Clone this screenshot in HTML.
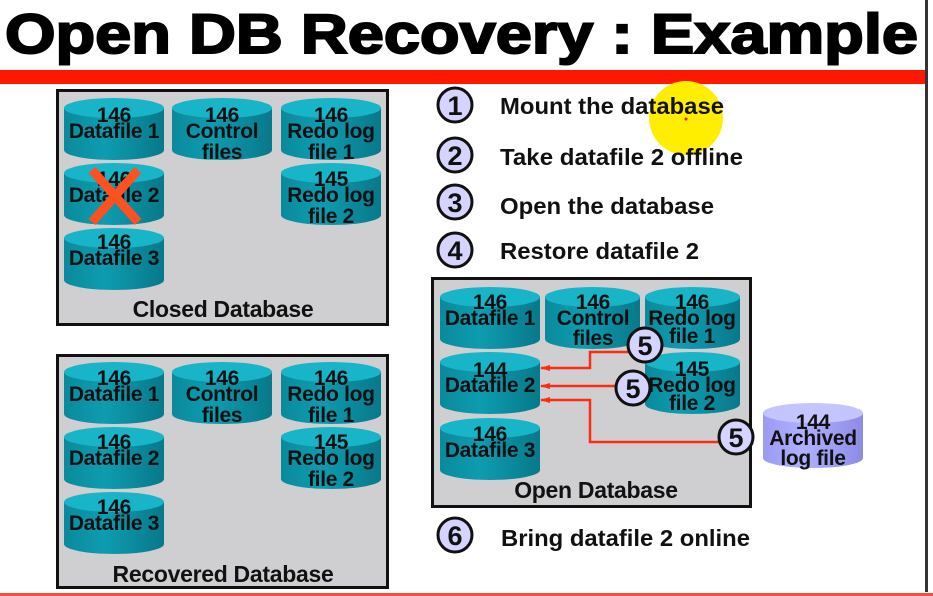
<!DOCTYPE html>
<html><head><meta charset="utf-8"><style>
html,body{margin:0;padding:0;background:#fff;width:933px;height:596px;overflow:hidden}
svg{display:block}
text{font-family:"Liberation Sans",Arial,sans-serif;font-weight:bold}
</style></head><body>
<svg width="933" height="596" viewBox="0 0 933 596" xmlns="http://www.w3.org/2000/svg">
<defs>
<linearGradient id="cb" x1="0" x2="1"><stop offset="0" stop-color="#0a8a9c"/><stop offset="0.4" stop-color="#0e9cb0"/><stop offset="1" stop-color="#07798a"/></linearGradient>
<linearGradient id="pb" x1="0" x2="1"><stop offset="0" stop-color="#9a9af2"/><stop offset="0.4" stop-color="#b0b0ff"/><stop offset="1" stop-color="#8c8ce6"/></linearGradient>
<g id="cyl"><path d="M0,10 V52 A50,10 0 0 0 100,52 V10 Z" fill="url(#cb)"/><ellipse cx="50" cy="10" rx="50" ry="10" fill="#18b4c8"/></g>
<g id="cylp"><path d="M0,10 V55 A50,10 0 0 0 100,55 V10 Z" fill="url(#pb)"/><ellipse cx="50" cy="10" rx="50" ry="10" fill="#c4c4ff"/></g>
<marker id="ah" markerUnits="userSpaceOnUse" markerWidth="10" markerHeight="8" refX="9" refY="4" orient="auto"><path d="M0,1 L10,4 L0,7 Z" fill="#ff2a10"/></marker>
</defs>

<text x="5" y="53" font-size="56" textLength="913" lengthAdjust="spacingAndGlyphs" stroke="#000" stroke-width="2">Open DB Recovery : Example</text>
<rect x="0" y="70" width="926" height="14" fill="#ff1800"/>
<rect x="925" y="0" width="3" height="592" fill="#333"/>
<rect x="0" y="593" width="933" height="3" fill="#f05040"/>

<g font-size="21" text-anchor="middle" fill="#111" letter-spacing="-0.3">
<!-- Closed DB -->
<rect x="57.5" y="90.5" width="330" height="234" fill="#cfcfd1" stroke="#111" stroke-width="3"/>
<use href="#cyl" x="64" y="98"/><text x="114" y="122">146</text><text x="114" y="138">Datafile 1</text>
<use href="#cyl" x="172" y="98"/><text x="222" y="122">146</text><text x="222" y="138">Control</text><text x="222" y="159">files</text>
<use href="#cyl" x="281" y="98"/><text x="331" y="122">146</text><text x="331" y="138">Redo log</text><text x="331" y="159">file 1</text>
<use href="#cyl" x="64" y="163"/><text x="114" y="186">146</text><text x="114" y="202">Datafile 2</text>
<use href="#cyl" x="281" y="163"/><text x="331" y="186">145</text><text x="331" y="202">Redo log</text><text x="331" y="223">file 2</text>
<use href="#cyl" x="64" y="228"/><text x="114" y="249">146</text><text x="114" y="265">Datafile 3</text>
<text x="223" y="317" font-size="23">Closed Database</text>

<!-- Recovered DB -->
<rect x="57.5" y="355.5" width="330" height="232" fill="#cfcfd1" stroke="#111" stroke-width="3"/>
<use href="#cyl" x="64" y="362"/><text x="114" y="385">146</text><text x="114" y="401">Datafile 1</text>
<use href="#cyl" x="172" y="362"/><text x="222" y="385">146</text><text x="222" y="401">Control</text><text x="222" y="422">files</text>
<use href="#cyl" x="281" y="362"/><text x="331" y="385">146</text><text x="331" y="401">Redo log</text><text x="331" y="422">file 1</text>
<use href="#cyl" x="64" y="427"/><text x="114" y="449">146</text><text x="114" y="465">Datafile 2</text>
<use href="#cyl" x="281" y="427"/><text x="331" y="449">145</text><text x="331" y="465">Redo log</text><text x="331" y="486">file 2</text>
<use href="#cyl" x="64" y="492"/><text x="114" y="514">146</text><text x="114" y="530">Datafile 3</text>
<text x="223" y="582" font-size="23">Recovered Database</text>
</g>
<g stroke="#ff5020" stroke-width="9"><line x1="92" y1="170" x2="138" y2="222"/><line x1="138" y1="170" x2="92" y2="222"/></g>

<!-- Open DB -->
<rect x="432.5" y="278.5" width="318" height="228" fill="#cfcfd1" stroke="#111" stroke-width="3"/>
<g font-size="21" text-anchor="middle" fill="#111" letter-spacing="-0.3">
<use href="#cyl" x="440" y="287"/><text x="490" y="309">146</text><text x="490" y="325">Datafile 1</text>
<use href="#cyl" transform="translate(545,287) scale(0.95,1)"/><text x="593" y="309">146</text><text x="593" y="325">Control</text><text x="593" y="345">files</text>
<use href="#cyl" transform="translate(645,287) scale(0.95,1)"/><text x="692" y="309">146</text><text x="692" y="325">Redo log</text><text x="692" y="343">file 1</text>
<use href="#cyl" x="440" y="352"/><text x="490" y="377">144</text><text x="490" y="392">Datafile 2</text>
<use href="#cyl" transform="translate(645,352) scale(0.95,1)"/><text x="692" y="376">145</text><text x="692" y="392">Redo log</text><text x="692" y="410">file 2</text>
<use href="#cyl" x="440" y="418"/><text x="490" y="441">146</text><text x="490" y="457">Datafile 3</text>
<text x="596" y="498" font-size="23">Open Database</text>
<use href="#cylp" x="763" y="403"/>
<text x="813" y="429">144</text><text x="813" y="445">Archived</text><text x="813" y="465">log file</text>
</g>

<g fill="none" stroke="#ff2a10" stroke-width="2.5">
<path d="M628,352 H590 V368 H541" marker-end="url(#ah)"/>
<path d="M617,386 H541" marker-end="url(#ah)"/>
<path d="M720,442 H590 V400 H541" marker-end="url(#ah)"/>
</g>
<g font-size="27" text-anchor="middle" fill="#111">
<circle cx="645" cy="345" r="17" fill="#d4d4ff" stroke="#111" stroke-width="3"/><text x="645" y="355">5</text>
<circle cx="633" cy="388" r="17" fill="#d4d4ff" stroke="#111" stroke-width="3"/><text x="633" y="398">5</text>
<circle cx="736" cy="437" r="17" fill="#d4d4ff" stroke="#111" stroke-width="3"/><text x="736" y="447">5</text>
</g>

<!-- Steps -->
<circle cx="686" cy="118" r="37" fill="#ffee00"/>
<circle cx="686" cy="119" r="1.5" fill="#e02020"/>
<g font-size="27" text-anchor="middle" fill="#111">
<circle cx="455" cy="105" r="17" fill="#d4d4ff" stroke="#111" stroke-width="3"/><text x="455" y="115">1</text>
<circle cx="455" cy="155" r="17" fill="#d4d4ff" stroke="#111" stroke-width="3"/><text x="455" y="165">2</text>
<circle cx="455" cy="202" r="17" fill="#d4d4ff" stroke="#111" stroke-width="3"/><text x="455" y="212">3</text>
<circle cx="455" cy="250" r="17" fill="#d4d4ff" stroke="#111" stroke-width="3"/><text x="455" y="260">4</text>
<circle cx="455" cy="535" r="17" fill="#d4d4ff" stroke="#111" stroke-width="3"/><text x="455" y="545">6</text>
</g>
<g font-size="23.5" fill="#111">
<text x="500" y="114" textLength="224" lengthAdjust="spacingAndGlyphs">Mount the database</text>
<text x="500" y="165" textLength="243" lengthAdjust="spacingAndGlyphs">Take datafile 2 offline</text>
<text x="500" y="214" textLength="214" lengthAdjust="spacingAndGlyphs">Open the database</text>
<text x="500" y="259" textLength="199" lengthAdjust="spacingAndGlyphs">Restore datafile 2</text>
<text x="501" y="546" textLength="249" lengthAdjust="spacingAndGlyphs">Bring datafile 2 online</text>
</g>
</svg>
</body></html>
